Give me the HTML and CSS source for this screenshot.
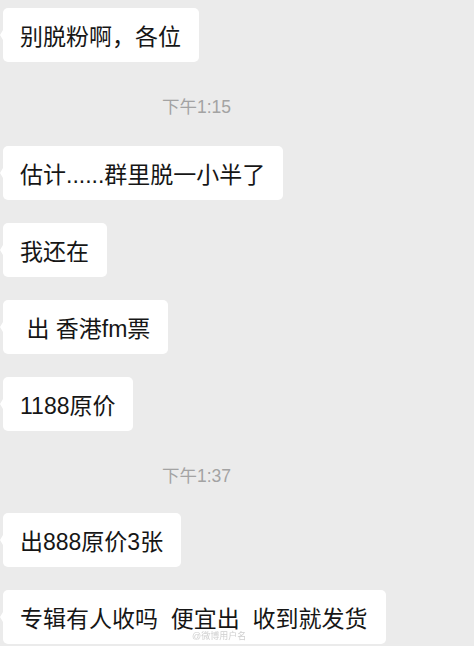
FILE: index.html
```html
<!DOCTYPE html>
<html lang="zh-CN">
<head>
<meta charset="utf-8">
<title>聊天记录</title>
<link rel="stylesheet" href="styles.css">
</head>
<body>
<main class="chat">
  <div class="bubble before-time">别脱粉啊，各位</div>
  <div class="time">下午1:15</div>
  <div class="bubble">估计......群里脱一小半了</div>
  <div class="bubble">我还在</div>
  <div class="bubble">&nbsp;出 香港fm票</div>
  <div class="bubble before-time">1188原价</div>
  <div class="time time-2">下午1:37</div>
  <div class="bubble">出888原价3张</div>
  <div class="bubble">专辑有人收吗&nbsp; 便宜出&nbsp; 收到就发货</div>
  <div class="watermark">@微博用户名</div>
</main>
</body>
</html>
```

FILE: styles.css
```css
html, body {
  margin: 0;
  padding: 0;
  background: #ebebeb;
}
.chat {
  position: relative;
  width: 474px;
  height: 646px;
  overflow: hidden;
  display: flex;
  flex-direction: column;
  align-items: flex-start;
  padding-top: 8px;
  box-sizing: border-box;
  font-family: "Liberation Sans", "Noto Sans CJK SC", sans-serif;
}
.bubble {
  position: relative;
  flex: none;
  height: 54px;
  box-sizing: border-box;
  margin-left: 3px;
  margin-bottom: 23px;
  padding: 0 18px 0 17px;
  background: #ffffff;
  border-radius: 5px;
  display: flex;
  align-items: center;
  font-size: 23px;
  color: #161616;
  white-space: nowrap;
}
.bubble::before {
  content: "";
  position: absolute;
  left: -3px;
  top: 22px;
  border-top: 5px solid transparent;
  border-bottom: 5px solid transparent;
  border-right: 3px solid #ffffff;
}
.bubble.before-time { margin-bottom: 35px; }
.time {
  flex: none;
  height: 20px;
  line-height: 20px;
  padding-left: 162px;
  font-size: 17.5px;
  color: #a3a3a3;
  margin-bottom: 29px;
}
.time.time-2 { margin-bottom: 27px; }
.watermark {
  position: absolute;
  left: 192px;
  top: 631px;
  font-size: 9px;
  line-height: 10px;
  color: #cfcfcf;
  filter: blur(0.5px);
}
```
